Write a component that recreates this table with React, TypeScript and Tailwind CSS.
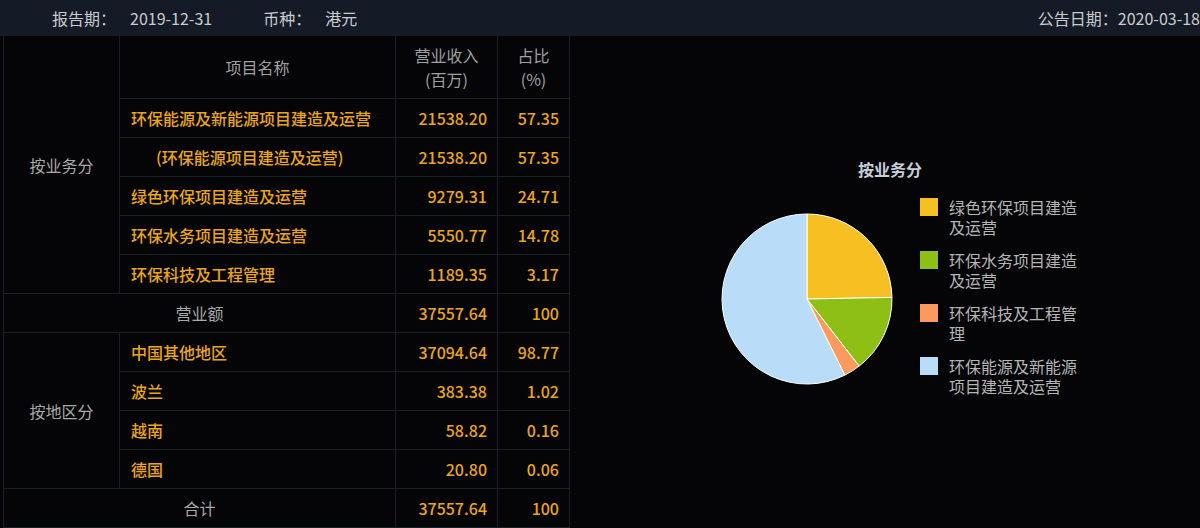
import React from "react";

type Row = { name: string; value: string; pct: string; indent?: boolean };

const bizRows: Row[] = [
  { name: "环保能源及新能源项目建造及运营", value: "21538.20", pct: "57.35" },
  { name: "(环保能源项目建造及运营)", value: "21538.20", pct: "57.35", indent: true },
  { name: "绿色环保项目建造及运营", value: "9279.31", pct: "24.71" },
  { name: "环保水务项目建造及运营", value: "5550.77", pct: "14.78" },
  { name: "环保科技及工程管理", value: "1189.35", pct: "3.17" },
];

const regionRows: Row[] = [
  { name: "中国其他地区", value: "37094.64", pct: "98.77" },
  { name: "波兰", value: "383.38", pct: "1.02" },
  { name: "越南", value: "58.82", pct: "0.16" },
  { name: "德国", value: "20.80", pct: "0.06" },
];

const slices = [
  { label: "绿色环保项目建造及运营", value: 24.71, color: "#f6c023" },
  { label: "环保水务项目建造及运营", value: 14.78, color: "#8dbf14" },
  { label: "环保科技及工程管理", value: 3.17, color: "#fb9a5c" },
  { label: "环保能源及新能源项目建造及运营", value: 57.35, color: "#b9dcf8" },
];

function PieChart() {
  const cx = 86;
  const cy = 86;
  const r = 85;
  const total = slices.reduce((s, x) => s + x.value, 0);
  let angle = -Math.PI / 2;
  return (
    <svg width="172" height="172" viewBox="0 0 172 172">
      {slices.map((s) => {
        const start = angle;
        const end = angle + (s.value / total) * Math.PI * 2;
        angle = end;
        const x1 = cx + r * Math.cos(start);
        const y1 = cy + r * Math.sin(start);
        const x2 = cx + r * Math.cos(end);
        const y2 = cy + r * Math.sin(end);
        const large = end - start > Math.PI ? 1 : 0;
        return (
          <path
            key={s.label}
            d={`M${cx},${cy} L${x1},${y1} A${r},${r} 0 ${large} 1 ${x2},${y2} Z`}
            fill={s.color}
            stroke="#ffffff"
            strokeWidth="1"
            strokeLinejoin="round"
          />
        );
      })}
    </svg>
  );
}

function DataRow({ row }: { row: Row }) {
  return (
    <>
      <div
        className={`bg-[#050507] flex items-center font-medium text-[#eaa51b] ${
          row.indent ? "pl-[36px]" : "pl-[11px]"
        }`}
      >
        {row.name}
      </div>
      <div className="bg-[#050507] flex items-center justify-end pr-[10px] font-medium text-[#eaa51b]">
        {row.value}
      </div>
      <div className="bg-[#050507] flex items-center justify-end pr-[10px] font-medium text-[#eaa51b]">
        {row.pct}
      </div>
    </>
  );
}

export default function App() {
  return (
    <div className="w-[1200px] h-[528px] overflow-hidden bg-[#050507] font-['Noto_Sans_CJK_SC','Microsoft_YaHei',sans-serif] text-[16px]">
      <div className="h-[36px] bg-[#141b27] flex items-center text-[#c9cbcf] whitespace-nowrap">
        <span className="ml-[52px]">报告期：</span>
        <span className="ml-[14px]">2019-12-31</span>
        <span className="ml-[51px]">币种：</span>
        <span className="ml-[14px]">港元</span>
        <span className="ml-auto">公告日期：2020-03-18</span>
      </div>
      <div className="flex">
        <div className="ml-[3px] grid grid-cols-[115px_275px_101px_71px] grid-rows-[62px_repeat(11,38px)] gap-px bg-[#19202c] border-l border-r border-[#19202c] h-[492px] overflow-hidden">
          <div className="row-span-6 bg-[#050507] flex items-center justify-center text-[#a9a9a9]">
            按业务分
          </div>
          <div className="bg-[#050507] flex items-center justify-center text-[#a0a0a0]">
            项目名称
          </div>
          <div className="bg-[#050507] flex flex-col items-center justify-center leading-6 text-[#a0a0a0]">
            <span>营业收入</span>
            <span>(百万)</span>
          </div>
          <div className="bg-[#050507] flex flex-col items-center justify-center leading-6 text-[#a0a0a0]">
            <span>占比</span>
            <span>(%)</span>
          </div>
          {bizRows.map((r, i) => (
            <DataRow key={i} row={r} />
          ))}
          <div className="col-span-2 bg-[#050507] flex items-center justify-center text-[#a9a9a9]">
            营业额
          </div>
          <div className="bg-[#050507] flex items-center justify-end pr-[10px] font-medium text-[#eaa51b]">
            37557.64
          </div>
          <div className="bg-[#050507] flex items-center justify-end pr-[10px] font-medium text-[#eaa51b]">
            100
          </div>
          <div className="row-span-4 bg-[#050507] flex items-center justify-center text-[#a9a9a9]">
            按地区分
          </div>
          {regionRows.map((r, i) => (
            <DataRow key={i} row={r} />
          ))}
          <div className="col-span-2 bg-[#050507] flex items-center justify-center text-[#a9a9a9]">
            合计
          </div>
          <div className="bg-[#050507] flex items-center justify-end pr-[10px] font-medium text-[#eaa51b]">
            37557.64
          </div>
          <div className="bg-[#050507] flex items-center justify-end pr-[10px] font-medium text-[#eaa51b]">
            100
          </div>
        </div>
        <div className="flex-1 pl-[151px] pt-[123px]">
          <div className="w-[338px] text-center font-bold leading-5 text-[#c6cfdc]">
            按业务分
          </div>
          <div className="flex items-start mt-[18px]">
            <div className="mt-[16px]">
              <PieChart />
            </div>
            <div className="ml-[27px] flex flex-col gap-[13px]">
              {slices.map((s) => (
                <div key={s.label} className="flex items-start">
                  <span
                    className="w-[18px] h-[18px] mt-px shrink-0"
                    style={{ backgroundColor: s.color }}
                  />
                  <span className="ml-[11px] w-[130px] leading-5 text-[#b5b5b5]">
                    {s.label}
                  </span>
                </div>
              ))}
            </div>
          </div>
        </div>
      </div>
    </div>
  );
}
